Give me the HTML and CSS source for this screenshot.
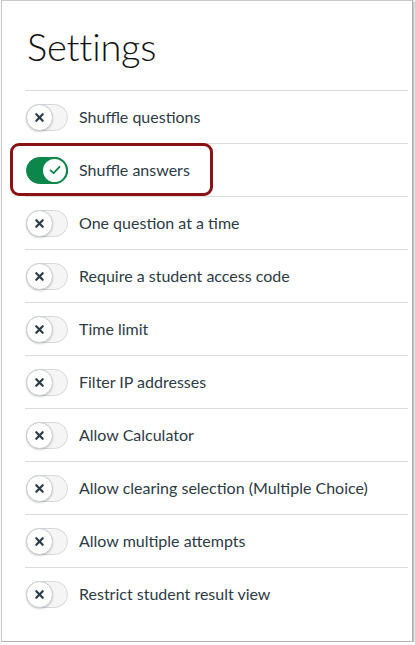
FILE: index.html
```html
<!DOCTYPE html>
<html lang="en">
<head>
<meta charset="utf-8">
<title>Settings</title>
<link rel="stylesheet" href="styles.css">
</head>
<body>
<div class="card">
  <h1 class="title">Settings</h1>
  <ul class="list">
    <li class="row">
      <span class="toggle"><span class="knob"><svg viewBox="0 0 12 12" class="ico-x"><path d="M2.5 2.5 L9.5 9.5 M9.5 2.5 L2.5 9.5"/></svg></span></span>
      <span class="label">Shuffle questions</span>
    </li>
    <li class="row highlighted">
      <span class="toggle on"><span class="knob"><svg viewBox="0 0 14 14" class="ico-check"><path d="M2.5 7.3 L5.6 10.2 L11.5 3.8"/></svg></span></span>
      <span class="label">Shuffle answers</span>
      <span class="callout"></span>
    </li>
    <li class="row">
      <span class="toggle"><span class="knob"><svg viewBox="0 0 12 12" class="ico-x"><path d="M2.5 2.5 L9.5 9.5 M9.5 2.5 L2.5 9.5"/></svg></span></span>
      <span class="label">One question at a time</span>
    </li>
    <li class="row">
      <span class="toggle"><span class="knob"><svg viewBox="0 0 12 12" class="ico-x"><path d="M2.5 2.5 L9.5 9.5 M9.5 2.5 L2.5 9.5"/></svg></span></span>
      <span class="label">Require a student access code</span>
    </li>
    <li class="row">
      <span class="toggle"><span class="knob"><svg viewBox="0 0 12 12" class="ico-x"><path d="M2.5 2.5 L9.5 9.5 M9.5 2.5 L2.5 9.5"/></svg></span></span>
      <span class="label">Time limit</span>
    </li>
    <li class="row">
      <span class="toggle"><span class="knob"><svg viewBox="0 0 12 12" class="ico-x"><path d="M2.5 2.5 L9.5 9.5 M9.5 2.5 L2.5 9.5"/></svg></span></span>
      <span class="label">Filter IP addresses</span>
    </li>
    <li class="row">
      <span class="toggle"><span class="knob"><svg viewBox="0 0 12 12" class="ico-x"><path d="M2.5 2.5 L9.5 9.5 M9.5 2.5 L2.5 9.5"/></svg></span></span>
      <span class="label">Allow Calculator</span>
    </li>
    <li class="row">
      <span class="toggle"><span class="knob"><svg viewBox="0 0 12 12" class="ico-x"><path d="M2.5 2.5 L9.5 9.5 M9.5 2.5 L2.5 9.5"/></svg></span></span>
      <span class="label">Allow clearing selection (Multiple Choice)</span>
    </li>
    <li class="row">
      <span class="toggle"><span class="knob"><svg viewBox="0 0 12 12" class="ico-x"><path d="M2.5 2.5 L9.5 9.5 M9.5 2.5 L2.5 9.5"/></svg></span></span>
      <span class="label">Allow multiple attempts</span>
    </li>
    <li class="row">
      <span class="toggle"><span class="knob"><svg viewBox="0 0 12 12" class="ico-x"><path d="M2.5 2.5 L9.5 9.5 M9.5 2.5 L2.5 9.5"/></svg></span></span>
      <span class="label">Restrict student result view</span>
    </li>
  </ul>
</div>
</body>
</html>
```
FILE: styles.css
```css
html, body {
  margin: 0;
  padding: 0;
  background: #ffffff;
}
body {
  font-family: Lato, "Noto Sans", sans-serif;
  color: #2d3b45;
}
.card {
  box-sizing: border-box;
  margin-left: 1px;
  width: 412px;
  height: 642px;
  border: 1px solid #c9c9c9;
  border-right-color: #b5b5b5;
  border-bottom-color: #b5b5b5;
  box-shadow: 1px 1px 2px rgba(0, 0, 0, 0.35);
  padding: 0 4px 0 23px;
  background: #fff;
}
.title {
  margin: 0;
  padding: 22px 0 20px 2px;
  font-size: 38px;
  line-height: 47px;
  font-weight: 300;
  color: #111;
  letter-spacing: -0.2px;
}
.list {
  list-style: none;
  margin: 0;
  padding: 0;
}
.row {
  position: relative;
  display: flex;
  align-items: center;
  gap: 11px;
  height: 52px;
  border-top: 1px solid #dadde0;
}
.label {
  font-size: 16px;
  line-height: 20px;
  color: #2d3b45;
}
.toggle {
  position: relative;
  display: flex;
  align-items: center;
  box-sizing: border-box;
  width: 42px;
  height: 27px;
  margin-left: 1px;
  border-radius: 14px;
  border: 1px solid #d4d8db;
  background: #f5f5f5;
}
.knob {
  box-sizing: border-box;
  display: flex;
  align-items: center;
  justify-content: center;
  width: 27px;
  height: 27px;
  margin-left: -1px;
  border-radius: 50%;
  background: #fff;
  border: 1px solid #c7cdd1;
  box-shadow: 0 1px 2px rgba(0, 0, 0, 0.18);
}
.ico-x {
  width: 11px;
  height: 11px;
  fill: none;
  stroke: #2d3b45;
  stroke-width: 2.4;
  stroke-linecap: round;
}
.toggle.on {
  background: #0b874b;
  border-color: #0b874b;
  justify-content: flex-end;
}
.toggle.on .knob {
  margin-left: 0;
  margin-right: -1px;
  border: 2px solid #0b874b;
  box-shadow: none;
}
.ico-check {
  width: 14px;
  height: 14px;
  fill: none;
  stroke: #0b874b;
  stroke-width: 1.8;
  stroke-linecap: round;
  stroke-linejoin: round;
}
.callout {
  position: absolute;
  left: -15px;
  top: -1px;
  width: 203px;
  height: 53px;
  box-sizing: border-box;
  border: 3px solid #8b1114;
  border-radius: 9px;
  pointer-events: none;
}
```
